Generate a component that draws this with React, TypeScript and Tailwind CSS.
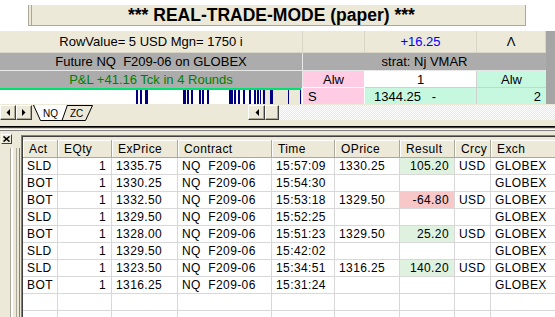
import React from "react";

const bars: [number, number][] = [
  [136, 138], [140, 142], [145, 148], [183, 186], [187, 189], [191, 193], [199, 201], [202, 204],
  [207, 209], [229, 233], [234, 236], [238, 240], [243, 245], [249, 251], [254, 256], [257, 259],
  [260, 261], [263, 265], [270, 273], [288, 289], [300, 301],
];

function Chart() {
  return (
    <svg width="303" height="16" className="block">
      <rect x="0" y="0" width="303" height="16" fill="#ffffff" />
      <rect x="262" y="2" width="41" height="14" fill="#ece9d8" />
      {bars.map(([a, b], i) => (
        <rect key={i} x={a} y={2} width={b - a} height={14} fill="#000080" />
      ))}
      <rect x="0" y="0" width="301" height="2" fill="#00e070" />
    </svg>
  );
}

function Arrow({ dir }: { dir: "l" | "r" }) {
  return (
    <svg width="4" height="7" className="block">
      {dir === "l" ? <polygon points="4,0 4,7 0.5,3.5" fill="#000" /> : <polygon points="0,0 0,7 3.5,3.5" fill="#000" />}
    </svg>
  );
}

function Btn({ dir, w }: { dir: "l" | "r"; w: string }) {
  return (
    <div
      className={`${w} h-[15px] bg-[#ece9d8] border border-t-white border-l-white border-r-[#404040] border-b-[#404040] shadow-[inset_-1px_-1px_0_#aca899] flex items-center justify-center`}
    >
      <Arrow dir={dir} />
    </div>
  );
}

const cols = ["Act", "EQty", "ExPrice", "Contract", "Time", "OPrice", "Result", "Crcy", "Exch"];

type Row = { v: string[]; res?: "g" | "r" };
const rows: Row[] = [
  { v: ["SLD", "1", "1335.75", "NQ  F209-06", "15:57:09", "1330.25", "105.20", "USD", "GLOBEX"], res: "g" },
  { v: ["BOT", "1", "1330.25", "NQ  F209-06", "15:54:30", "", "", "", "GLOBEX"] },
  { v: ["BOT", "1", "1332.50", "NQ  F209-06", "15:53:18", "1329.50", "-64.80", "USD", "GLOBEX"], res: "r" },
  { v: ["SLD", "1", "1329.50", "NQ  F209-06", "15:52:25", "", "", "", "GLOBEX"] },
  { v: ["BOT", "1", "1328.00", "NQ  F209-06", "15:51:23", "1329.50", "25.20", "USD", "GLOBEX"], res: "g" },
  { v: ["SLD", "1", "1329.50", "NQ  F209-06", "15:42:02", "", "", "", "GLOBEX"] },
  { v: ["SLD", "1", "1323.50", "NQ  F209-06", "15:34:51", "1316.25", "140.20", "USD", "GLOBEX"], res: "g" },
  { v: ["BOT", "1", "1316.25", "NQ  F209-06", "15:31:24", "", "", "", "GLOBEX"] },
  { v: ["", "", "", "", "", "", "", "", ""] },
  { v: ["", "", "", "", "", "", "", "", ""] },
];

const gridCols = "grid grid-cols-[35px_54px_66px_94px_63px_65px_55px_36px_70px]";

export default function App() {
  return (
    <div className="w-[555px] h-[317px] overflow-hidden bg-white text-black font-['Liberation_Sans',Arial,sans-serif]">
      {/* title */}
      <div className="h-[31px] pt-[5px] pl-[28px]">
        <div className="w-[498px] h-[21px] bg-[#ece9d8] border-l border-r border-b border-[#aca899] shadow-[inset_2px_0_0_#ece9d8,inset_3px_0_0_#aca899] flex items-center pl-[99px] pt-[2px] font-bold text-[17.5px] leading-none whitespace-pre">
          *** REAL-TRADE-MODE (paper) ***
        </div>
      </div>

      {/* info grid */}
      <div className="flex h-[73px] text-[13px] leading-none">
        <div className="w-[546px] grid grid-cols-[303px_62px_112px_69px] grid-rows-[22px_18px_17px_16px]">
          <div className="bg-[#ece9d8] border-b border-r border-[#d8d5c6] flex items-center justify-center">RowValue= 5 USD Mgn= 1750 i</div>
          <div className="bg-[#ece9d8] border-b border-r border-[#d8d5c6]" />
          <div className="bg-[#ece9d8] border-b border-r border-[#d8d5c6] flex items-center justify-center text-[#0000ff]">+16.25</div>
          <div className="bg-[#ece9d8] border-b border-r border-[#d8d5c6] flex items-center justify-center">Λ</div>

          <div className="bg-[#acacac] border-b border-r border-[#e8e8e8] flex items-center justify-center whitespace-pre">Future NQ  F209-06 on GLOBEX</div>
          <div className="col-span-3 bg-[#acacac] border-b border-[#e8e8e8] flex items-center justify-center">strat: Nj VMAR</div>

          <div className="bg-[#acacac] border-r border-[#e8e8e8] flex items-center justify-center text-[#008000]">P&amp;L +41.16 Tck in 4 Rounds</div>
          <div className="bg-[#ffcce4] border-b border-r border-white flex items-center justify-center">Alw</div>
          <div className="bg-white border-b border-r border-[#d0d0d0] flex items-center justify-center">1</div>
          <div className="bg-[#c6f8e0] border-b border-[#d0d0d0] flex items-center justify-center">Alw</div>

          <div className="overflow-hidden border-r border-white">
            <Chart />
          </div>
          <div className="bg-[#ffcce4] border-r border-white flex items-center pl-[5px]">S</div>
          <div className="bg-[#c6f8e0] border-r border-[#d0d0d0] flex items-center pl-[9px] whitespace-pre">1344.25   -</div>
          <div className="bg-[#c6f8e0] flex items-center justify-end pr-[5px]">2</div>
        </div>
        <div className="flex-1 bg-[#a5a5a5]" />
      </div>

      {/* tab bar */}
      <div className="h-[22px] bg-[#ece9d8] flex items-start pt-[1px]">
        <Btn dir="l" w="w-[16px]" />
        <Btn dir="r" w="w-[16px]" />
        <div className="relative w-[62px] h-[16px] ml-[1px]">
          <svg width="62" height="16" className="absolute inset-0">
            <polygon points="28,0.5 59.5,0.5 52.5,15.5 29,15.5" fill="#ece9d8" stroke="#000" strokeWidth="1" />
            <polygon points="0.5,0 34.5,0 29,15.5 7.5,15.5" fill="#ffffff" stroke="#000" strokeWidth="1" />
            <line x1="1.5" y1="0.5" x2="33.5" y2="0.5" stroke="#ffffff" />
          </svg>
          <div className="relative flex h-[16px] items-center text-[10px] leading-none pt-[1px]">
            <span className="ml-[10px]">NQ</span>
            <span className="ml-[12px]">ZC</span>
          </div>
        </div>
        <div className="ml-[153px] flex-1 flex h-[15px]">
          <Btn dir="l" w="w-[17px]" />
          <div className="w-[14px] h-[15px] bg-[#ece9d8] border border-t-white border-l-white border-r-[#404040] border-b-[#404040] shadow-[inset_-1px_-1px_0_#aca899]" />
          <div className="flex-1 bg-[repeating-conic-gradient(#ece9d8_0%_25%,#ffffff_0%_50%)] bg-[length:2px_2px]" />
        </div>
      </div>

      {/* splitter */}
      <div className="h-[1px] bg-black" />
      <div className="h-[1px] bg-[#404040]" />
      <div className="h-[1px] bg-[#d4d0c8]" />
      <div className="h-[1px] bg-white" />
      <div className="h-[1px] bg-[#808080]" />
      <div className="h-[2px] bg-[#ece9d8]" />

      {/* lower panel */}
      <div className="flex h-[184px] bg-[#ece9d8]">
        <div className="w-[21px] flex flex-col">
          <div className="ml-[1px] mt-[1px] w-[11px] h-[10px] bg-[#ece9d8] border border-t-white border-l-white border-r-[#404040] border-b-[#404040] flex items-center justify-center">
            <svg width="7" height="6" className="block">
              <path d="M0.5 0.5 L6.5 5.5 M6.5 0.5 L0.5 5.5" stroke="#000" strokeWidth="1.6" />
            </svg>
          </div>
          <div className="flex-1 flex mt-[4px]">
            <div className="w-[10px]" />
            <div className="w-[1px] bg-[#aca899]" />
            <div className="w-[2px] bg-white" />
            <div className="w-[3px] bg-[#ece9d8]" />
            <div className="w-[1px] bg-[#aca899]" />
            <div className="w-[2px] bg-[#ece9d8]" />
            <div className="w-[1px] bg-[#808080]" />
            <div className="w-[1px] bg-[#ece9d8]" />
          </div>
        </div>
        <div className="flex-1 flex flex-col pt-[2px] overflow-hidden">
          <div className="flex-1 border-t border-l border-[#808080] flex flex-col overflow-hidden">
            <div className="flex-1 border-t border-l border-[#404040] pt-[3px] flex flex-col overflow-hidden">
              <div className="flex-1 bg-white overflow-hidden text-[12px] tracking-[0.4px] leading-none">
                <div className={`${gridCols} h-[18px] bg-[#ece9d8]`}>
                  {cols.map((c) => (
                    <div
                      key={c}
                      className="border-r border-b border-[#aca899] shadow-[inset_1px_1px_0_#ffffff] flex items-center pl-[6px] pt-[1px]"
                    >
                      {c}
                    </div>
                  ))}
                </div>
                {rows.map((r, ri) => (
                  <div key={ri} className={`${gridCols} h-[17px]`}>
                    {r.v.map((v, ci) => {
                      const right = ci === 1 || ci === 6;
                      const bg =
                        ci === 6 && r.res === "g"
                          ? "bg-[#dff2df]"
                          : ci === 6 && r.res === "r"
                          ? "bg-[#f8c8c8]"
                          : "bg-white";
                      return (
                        <div
                          key={ci}
                          className={`${bg} border-r border-b border-[#d8d8d8] flex items-center whitespace-pre ${
                            right ? "justify-end pr-[5px]" : "pl-[4px]"
                          }`}
                        >
                          {v}
                        </div>
                      );
                    })}
                  </div>
                ))}
              </div>
            </div>
          </div>
        </div>
      </div>
    </div>
  );
}
